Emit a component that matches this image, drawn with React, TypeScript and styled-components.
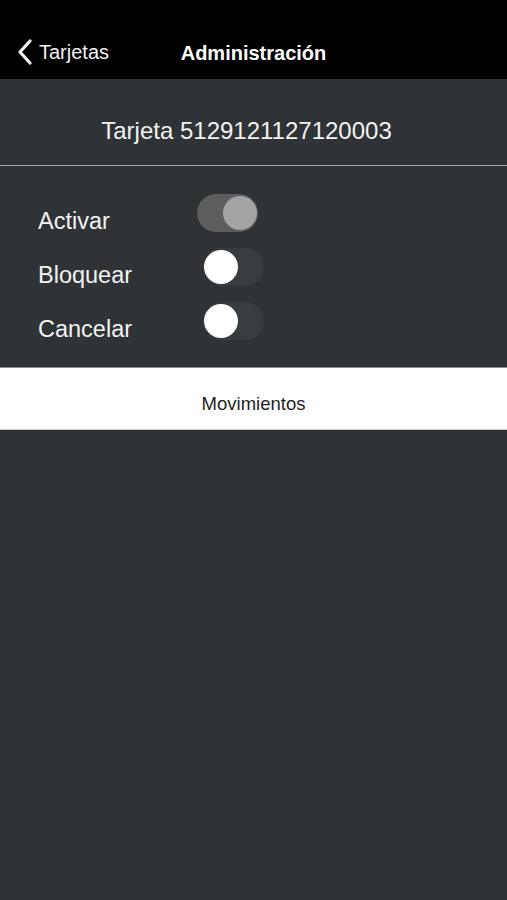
import React from "react";
import styled, { createGlobalStyle } from "styled-components";

const GlobalStyle = createGlobalStyle`
  html, body { margin: 0; padding: 0; background: #2f3335; }
  body { font-family: "Liberation Sans", Arial, sans-serif; }
  * { box-sizing: border-box; }
`;

const Page = styled.div`
  width: 507px;
  min-height: 900px;
  background: #2f3335;
  display: flex;
  flex-direction: column;
`;

const NavBar = styled.div`
  height: 79px;
  background: #000;
  display: grid;
  grid-template-columns: 1fr auto 1fr;
  align-items: end;
  padding: 0 0 14px 17px;
`;

const BackButton = styled.div`
  display: flex;
  align-items: center;
  gap: 6px;
  color: #f2f2f2;
  font-size: 20px;
  line-height: 24px;
`;

const Title = styled.div`
  color: #fff;
  font-weight: 700;
  font-size: 20px;
  line-height: 24px;
  padding-right: 17px;
`;

const CardHeader = styled.div`
  padding: 38px 14px 20px 0;
  text-align: center;
  color: #f2f2f2;
  font-size: 24px;
  line-height: 28px;
  border-bottom: 1px solid #a2a4a5;
`;

const Options = styled.div`
  padding: 28px 0 11px 38px;
  display: flex;
  flex-direction: column;
`;

const Row = styled.div`
  height: 54px;
  display: flex;
  align-items: flex-start;
`;

const Label = styled.div`
  width: 159px;
  color: #f2f2f2;
  font-size: 23.5px;
  line-height: 54px;
`;

const Track = styled.div<{ $on: boolean }>`
  width: 61px;
  height: 38px;
  border-radius: 19px;
  margin-left: ${(p) => (p.$on ? "0px" : "6px")};
  background: ${(p) => (p.$on ? "#5b5d5e" : "#393c3e")};
  display: flex;
  align-items: center;
  justify-content: ${(p) => (p.$on ? "flex-end" : "flex-start")};
  padding: 0 1px;
`;

const Knob = styled.div<{ $on: boolean }>`
  width: 34px;
  height: 34px;
  border-radius: 50%;
  background: ${(p) => (p.$on ? "#a4a4a4" : "#ffffff")};
`;

const ActionBand = styled.div`
  background: #fff;
  border-top: 1px solid #8f9192;
  border-bottom: 1px solid #c9cacb;
  padding: 25px 0 14px;
  text-align: center;
  color: #1e1e1e;
  font-size: 18.5px;
  line-height: 22px;
`;

const Toggle = ({ on }: { on: boolean }) => (
  <Track $on={on}>
    <Knob $on={on} />
  </Track>
);

const options = [
  { label: "Activar", on: true },
  { label: "Bloquear", on: false },
  { label: "Cancelar", on: false },
];

export default function App() {
  return (
    <Page>
      <GlobalStyle />
      <NavBar>
        <BackButton>
          <svg width="16" height="26" viewBox="0 0 16 26">
            <path d="M13 2 L3 13 L13 24" fill="none" stroke="#f2f2f2" strokeWidth="3.2" strokeLinecap="round" strokeLinejoin="round" />
          </svg>
          <span>Tarjetas</span>
        </BackButton>
        <Title>Administración</Title>
        <div />
      </NavBar>
      <CardHeader>Tarjeta 5129121127120003</CardHeader>
      <Options>
        {options.map((o) => (
          <Row key={o.label}>
            <Label>{o.label}</Label>
            <Toggle on={o.on} />
          </Row>
        ))}
      </Options>
      <ActionBand>Movimientos</ActionBand>
    </Page>
  );
}
